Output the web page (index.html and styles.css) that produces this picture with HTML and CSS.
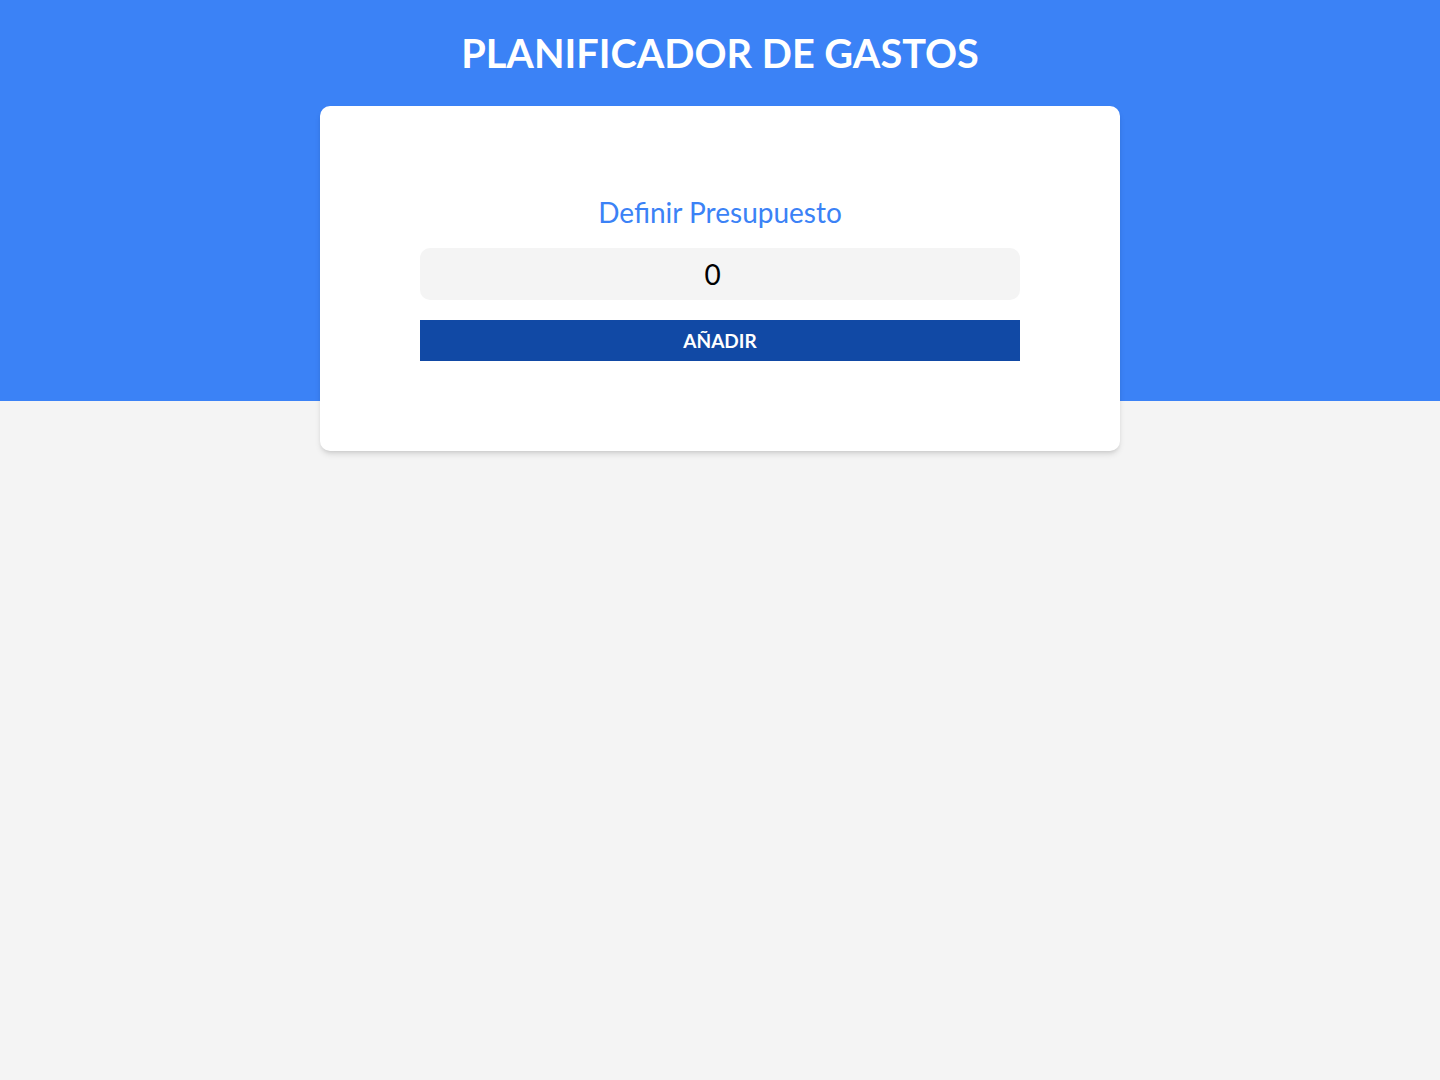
FILE: index.html
```html
<!DOCTYPE html>
<html lang="es">
<head>
<meta charset="utf-8">
<title>Planificador de Gastos</title>
<link rel="stylesheet" href="styles.css">
</head>
<body>
  <header class="header">
    <h1 class="title">PLANIFICADOR DE GASTOS</h1>
    <div class="card">
      <form class="budget-form">
        <label class="budget-label" for="budget">Definir Presupuesto</label>
        <input class="budget-input" id="budget" type="number" value="0">
        <button class="budget-button" type="button">AÑADIR</button>
      </form>
    </div>
  </header>
</body>
</html>
```
FILE: styles.css
```css
* { box-sizing: border-box; }
html, body { margin: 0; padding: 0; }
body {
  font-family: Lato, "Open Sans", sans-serif;
  min-height: 1080px;
  background: linear-gradient(to bottom, #3b82f6 0, #3b82f6 401px, #f4f4f4 401px, #f4f4f4 100%);
}
.header {
  padding-top: 29px;
  display: flex;
  flex-direction: column;
  align-items: center;
}
.title {
  margin: 0;
  color: #ffffff;
  font-size: 39.7px;
  font-weight: 700;
  line-height: 48px;
  text-align: center;
}
.card {
  margin-top: 29px;
  width: 800px;
  background: #ffffff;
  border-radius: 10px;
  padding: 88px 100px 90px;
  box-shadow: 0 4px 6px -1px rgba(0,0,0,0.12), 0 2px 4px -2px rgba(0,0,0,0.12);
}
.budget-form {
  display: flex;
  flex-direction: column;
}
.budget-label {
  color: #3b82f6;
  font-size: 28px;
  line-height: 36px;
  text-align: center;
  margin-bottom: 18px;
}
.budget-input {
  height: 52px;
  border: none;
  border-radius: 10px;
  background: #f4f4f4;
  font-family: Lato, sans-serif;
  font-size: 28px;
  text-align: center;
  color: #000;
  padding: 0 8px;
  outline: none;
}
.budget-button {
  margin-top: 20px;
  height: 41px;
  border: none;
  background: #1149a5;
  color: #ffffff;
  font-family: Lato, sans-serif;
  font-weight: 700;
  font-size: 19px;
  cursor: pointer;
}
```
